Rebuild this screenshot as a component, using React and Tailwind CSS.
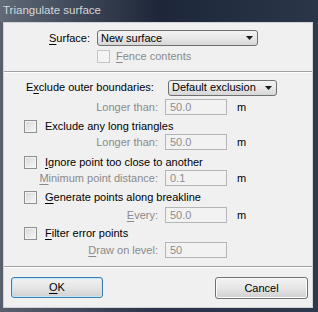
import React from "react";

const font = { fontFamily: '"Liberation Sans", Arial, sans-serif' };

function U({ children }) {
  return <span className="underline underline-offset-[2px] decoration-1">{children}</span>;
}

function Check({ disabled }) {
  return (
    <div
      className={
        "w-[13px] h-[13px] shrink-0 border " +
        (disabled
          ? "border-[#c4c4c4] bg-[#f4f4f4]"
          : "border-[#8e8f8f] bg-gradient-to-br from-[#d6d6d6] to-[#fafafa] shadow-[inset_0_0_0_1px_#f4f4f4]")
      }
    />
  );
}

function Combo({ text, w }) {
  return (
    <div
      className={
        "h-[16px] border border-[#707070] rounded-[3px] bg-gradient-to-b from-[#f3f3f3] via-[#e8e8e8] to-[#d6d6d6] flex items-center pl-[3px] pr-[4px] text-[11px] leading-none text-black whitespace-nowrap " +
        w
      }
    >
      <span className="flex-1">{text}</span>
      <svg width="7" height="4" viewBox="0 0 7 4">
        <path d="M0 0 H7 L3.5 4 Z" fill="#1a1a1a" />
      </svg>
    </div>
  );
}

function InputRow({ label, value, unit = true }) {
  return (
    <div className="h-[16px] flex items-center whitespace-nowrap">
      <div className="w-[154px] text-right text-[11px] leading-none text-[#8a8a8a]">{label}</div>
      <div className="ml-[7px] w-[62px] h-[16px] border border-[#b5b5b5] bg-[#f2f2f2] flex items-center pl-[4px] text-[11px] leading-none text-[#8d8d8d]">
        {value}
      </div>
      {unit && <div className="ml-[10px] text-[11px] leading-none text-black">m</div>}
    </div>
  );
}

function CheckRow({ children, className }) {
  return (
    <div className={"h-[14px] flex items-center pl-[20px] whitespace-nowrap " + className}>
      <Check />
      <div className="ml-[8px] text-[11px] leading-none text-black">{children}</div>
    </div>
  );
}

function Sep({ className }) {
  return (
    <div className={"shrink-0 " + className}>
      <div className="h-px bg-[#a0a0a0]" />
      <div className="h-px bg-white" />
    </div>
  );
}

export default function App() {
  return (
    <div
      className="w-[318px] h-[312px] flex flex-col bg-gradient-to-r from-[#59606d] via-[#2a3347] to-[#2e394c] overflow-hidden"
      style={font}
    >
      <div className="h-[22px] shrink-0 flex items-center pl-[3px] text-[11.5px] text-[#d3d7dc] bg-gradient-to-r from-[#626a78] via-[#1d2739] to-[#2b3649] whitespace-nowrap">
        Triangulate surface
      </div>
      <div className="flex-1 ml-[3px] mr-[5px] mb-[4px] bg-[#f0f0f0] border border-[#cfd3d8] flex flex-col">
        <div className="mt-[7px] h-[16px] flex items-center whitespace-nowrap">
          <div className="w-[86px] text-right text-[11px] leading-none text-black">
            <U>S</U>urface:
          </div>
          <div className="ml-[7px]">
            <Combo text="New surface" w="w-[161px]" />
          </div>
        </div>
        <div className="mt-[3px] h-[14px] flex items-center pl-[93px] whitespace-nowrap">
          <Check disabled />
          <div className="ml-[6px] text-[11px] leading-none text-[#8a8a8a]">
            <U>F</U>ence contents
          </div>
        </div>
        <Sep className="mt-[8px]" />
        <div className="mt-[7px] h-[15px] flex items-center whitespace-nowrap">
          <div className="w-[164px] pl-[22px] text-[11px] leading-none text-black">
            E<U>x</U>clude outer boundaries:
          </div>
          <Combo text="Default exclusion" w="w-[109px]" />
        </div>
        <div className="mt-[4px]">
          <InputRow label="Longer than:" value="50.0" />
        </div>
        <CheckRow className="mt-[4px]">Exclude any long triangles</CheckRow>
        <div className="mt-[1px]">
          <InputRow label="Longer than:" value="50.0" />
        </div>
        <CheckRow className="mt-[5px]">
          <U>I</U>gnore point too close to another
        </CheckRow>
        <div className="mt-[1px]">
          <InputRow
            label={
              <>
                <U>M</U>inimum point distance:
              </>
            }
            value="0.1"
          />
        </div>
        <CheckRow className="mt-[4px]">
          <U>G</U>enerate points along breakline
        </CheckRow>
        <div className="mt-[3px]">
          <InputRow
            label={
              <>
                <U>E</U>very:
              </>
            }
            value="50.0"
          />
        </div>
        <CheckRow className="mt-[3px]">
          <U>F</U>ilter error points
        </CheckRow>
        <div className="mt-[2px]">
          <InputRow
            label={
              <>
                <U>D</U>raw on level:
              </>
            }
            value="50"
            unit={false}
          />
        </div>
        <Sep className="mt-[8px]" />
        <div className="mt-[9px] flex justify-between pl-[7px] pr-[4px]">
          <div className="w-[92px] h-[21px] rounded-[3px] border border-[#3c7fb1] bg-gradient-to-b from-[#f2f2f2] via-[#e6e6e6] to-[#d0d0d0] shadow-[inset_0_0_0_1px_#bfe6f6] flex items-center justify-center text-[11px] leading-none text-black">
            <U>O</U>K
          </div>
          <div className="w-[93px] h-[22px] rounded-[3px] border border-[#707070] bg-gradient-to-b from-[#f2f2f2] via-[#e6e6e6] to-[#d0d0d0] shadow-[inset_0_0_0_1px_#fbfbfb] flex items-center justify-center text-[11px] leading-none text-black">
            Cancel
          </div>
        </div>
      </div>
    </div>
  );
}
